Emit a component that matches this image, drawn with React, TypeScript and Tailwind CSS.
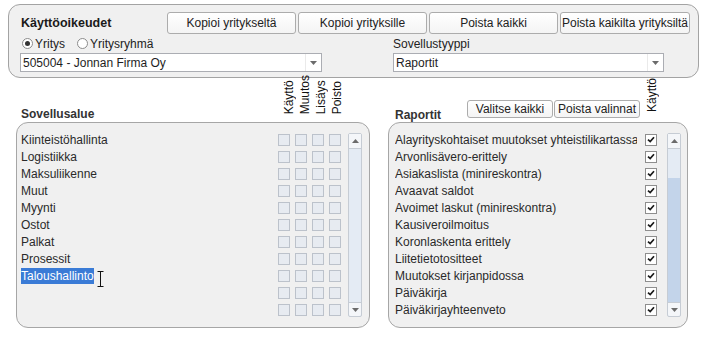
import React from 'react';

const leftRows = [
  'Kiinteistöhallinta',
  'Logistiikka',
  'Maksuliikenne',
  'Muut',
  'Myynti',
  'Ostot',
  'Palkat',
  'Prosessit',
  'Taloushallinto',
  '',
  '',
];

const reportRows = [
  'Alayrityskohtaiset muutokset yhteistilikartassa',
  'Arvonlisävero-erittely',
  'Asiakaslista (minireskontra)',
  'Avaavat saldot',
  'Avoimet laskut (minireskontra)',
  'Kausiveroilmoitus',
  'Koronlaskenta erittely',
  'Liitetietotositteet',
  'Muutokset kirjanpidossa',
  'Päiväkirja',
  'Päiväkirjayhteenveto',
];

const Arrow = ({ up }: { up?: boolean }) => (
  <svg width="7" height="4" viewBox="0 0 7 4">
    <path d={up ? 'M0 4 L3.5 0 L7 4 Z' : 'M0 0 L3.5 4 L7 0 Z'} fill="#6b6b6b" />
  </svg>
);

const Button = ({ label, className }: { label: string; className: string }) => (
  <button className={`flex items-center justify-center rounded-[3px] border border-[#acacac] bg-gradient-to-b from-white to-[#f4f4f4] text-[12px] text-[#222] ${className}`}>
    {label}
  </button>
);

const Select = ({ value, className }: { value: string; className: string }) => (
  <div className={`flex h-[19px] items-center border border-[#abadb3] bg-white ${className}`}>
    <span className="flex-1 pl-[2px] text-[12px] leading-[14px] text-[#1e1e1e]">{value}</span>
    <div className="flex h-full w-[16px] items-center justify-center border-l border-[#eaeaea]">
      <Arrow />
    </div>
  </div>
);

const Radio = ({ checked, label }: { checked?: boolean; label: string }) => (
  <div className="flex items-center">
    <div className="flex h-[11px] w-[11px] items-center justify-center rounded-full border border-[#8c8c8c] bg-white">
      {checked && <div className="h-[5px] w-[5px] rounded-full bg-[#333]" />}
    </div>
    <span className="ml-[2px] text-[12px] leading-[14px] text-[#222]">{label}</span>
  </div>
);

const Scrollbar = ({ thumb }: { thumb?: boolean }) => (
  <div className="flex h-[184px] w-[14px] flex-col rounded-[2px] border border-[#c6ccd4] bg-[#e4ebf4]">
    <div className="flex h-[15px] items-center justify-center border-b border-[#c6ccd4] bg-[#f4f6f9]">
      <Arrow up />
    </div>
    {thumb ? (
      <>
        <div className="h-[29px]" />
        <div className="flex-1 bg-[#c3d4ea]" />
      </>
    ) : (
      <div className="flex-1" />
    )}
    <div className="flex h-[14px] items-center justify-center rounded-b-[2px] border-t border-[#c6ccd4] bg-[#f4f6f9]">
      <Arrow />
    </div>
  </div>
);

const EmptyBox = () => (
  <div className="h-[12px] w-[12px] border border-[#bcc2cb] bg-[#e7ebf1]" />
);

const CheckedBox = () => (
  <div className="flex h-[12px] w-[12px] items-center justify-center border border-[#8e8e8e] bg-white">
    <svg width="8" height="7" viewBox="0 0 8 7">
      <path d="M1 3.6 L3.2 5.6 L7 1.2" stroke="#1a1a1a" strokeWidth="1.7" fill="none" />
    </svg>
  </div>
);

const VLabel = ({ text }: { text: string }) => (
  <div className="flex w-[12px] justify-center">
    <span className="rotate-180 text-[12px] leading-[14px] text-[#111] [writing-mode:vertical-rl]">{text}</span>
  </div>
);

export default function App() {
  return (
    <div className="h-[341px] w-[717px] overflow-hidden bg-white font-['Liberation_Sans',Arial,sans-serif] text-[12px] text-[#222]">
      {/* Top panel */}
      <div className="ml-[8px] mt-[4px] h-[74px] w-[691px] rounded-[12px] border border-[#a3a3a3] bg-[#f0f0f0] pl-[11px] pt-[7px]">
        <div className="flex h-[22px] items-center">
          <div className="w-[147px] pl-[1px] text-[12.5px] font-bold text-[#1a1a1a]">Käyttöoikeudet</div>
          <div className="flex gap-[2px]">
            <Button label="Kopioi yritykseltä" className="h-[22px] w-[129px]" />
            <Button label="Kopioi yrityksille" className="h-[22px] w-[129px]" />
            <Button label="Poista kaikki" className="h-[22px] w-[129px]" />
            <Button label="Poista kaikilta yrityksiltä" className="h-[22px] w-[130px]" />
          </div>
        </div>
        <div className="flex">
          <div className="w-[302px]">
            <div className="flex h-[19px] items-center gap-[12px] pl-[2px]">
              <Radio checked label="Yritys" />
              <Radio label="Yritysryhmä" />
            </div>
            <Select value="505004 - Jonnan Firma Oy" className="w-[302px]" />
          </div>
          <div className="ml-[71px] w-[271px]">
            <div className="flex h-[19px] items-center text-[12px] text-[#222]">Sovellustyyppi</div>
            <Select value="Raportit" className="w-[271px]" />
          </div>
        </div>
      </div>

      {/* Lower section */}
      <div className="flex gap-[18px] pl-[16px]">
        {/* Sovellusalue */}
        <div className="w-[354px]">
          <div className="flex h-[44px] items-end">
            <div className="flex-1 pb-[1px] pl-[5px] text-[12px] font-bold leading-[14px] text-[#333]">Sovellusalue</div>
            <div className="mr-[27px] flex gap-[4px] pb-[8px]">
              <VLabel text="Käyttö" />
              <VLabel text="Muutos" />
              <VLabel text="Lisäys" />
              <VLabel text="Poisto" />
            </div>
          </div>
          <div className="flex h-[206px] items-start rounded-[12px] border border-[#a6a6a6] bg-[#f0f0f0] pl-[4px] pt-[8px]">
            <div className="flex-1">
              {leftRows.map((row, i) => (
                <div key={i} className="flex h-[17px] items-center">
                  <div className="flex flex-1 items-center text-[12px] leading-[14px] text-[#2a2a2a]">
                    {row === 'Taloushallinto' ? (
                      <>
                        <span className="bg-[#3a7bd6] py-[1px] text-white">{row}</span>
                        <svg width="7" height="16" viewBox="0 0 7 16" className="ml-[3px] mt-[6px]">
                          <path d="M0.5 0.5 H6.5 M3.5 0.5 V15.5 M0.5 15.5 H6.5" stroke="#111" strokeWidth="1" fill="none" />
                        </svg>
                      </>
                    ) : (
                      row
                    )}
                  </div>
                  <div className="flex gap-[5px]">
                    <EmptyBox />
                    <EmptyBox />
                    <EmptyBox />
                    <EmptyBox />
                  </div>
                </div>
              ))}
            </div>
            <div className="ml-[7px] mr-[7px] mt-[2px]">
              <Scrollbar />
            </div>
          </div>
        </div>

        {/* Raportit */}
        <div className="w-[300px]">
          <div className="flex h-[44px] items-end">
            <div className="w-[79px] pl-[7px] text-[12px] font-bold leading-[14px] text-[#333]">Raportit</div>
            <div className="flex gap-[1px] pb-[4px]">
              <Button label="Valitse kaikki" className="h-[18px] w-[86px]" />
              <Button label="Poista valinnat" className="h-[18px] w-[86px]" />
            </div>
            <div className="ml-[6px] pb-[10px]">
              <VLabel text="Käyttö" />
            </div>
          </div>
          <div className="flex h-[206px] items-start rounded-[12px] border border-[#a6a6a6] bg-[#f0f0f0] pl-[6px] pt-[8px]">
            <div className="w-[262px]">
              {reportRows.map((row) => (
                <div key={row} className="flex h-[17px] items-center">
                  <div className="min-w-0 flex-1 overflow-hidden whitespace-nowrap text-[12px] leading-[14px] text-[#2a2a2a]">{row}</div>
                  <div className="ml-[8px]">
                    <CheckedBox />
                  </div>
                </div>
              ))}
            </div>
            <div className="ml-[10px] mt-[2px]">
              <Scrollbar thumb />
            </div>
          </div>
        </div>
      </div>
    </div>
  );
}
